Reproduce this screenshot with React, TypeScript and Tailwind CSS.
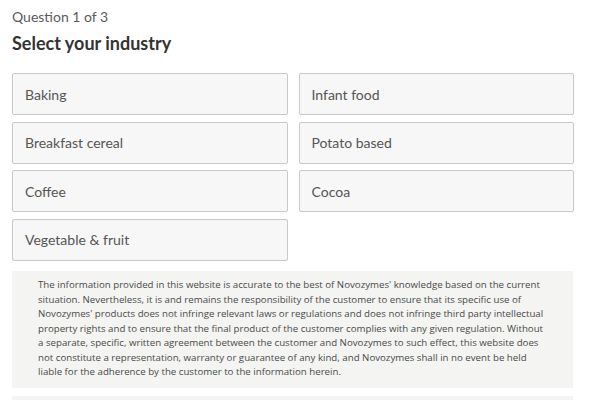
const industries = [
  'Baking',
  'Infant food',
  'Breakfast cereal',
  'Potato based',
  'Coffee',
  'Cocoa',
  'Vegetable & fruit',
]

export default function App() {
  return (
    <div className="w-[600px] h-[400px] overflow-hidden bg-white px-3 pt-[8px] font-['Lato',sans-serif]">
      <div className="text-[14px] leading-[18px] text-[#5a5a5a]">Question 1 of 3</div>
      <h1 className="mt-[6px] text-[18px] leading-[22px] font-bold text-[#333]">Select your industry</h1>

      <div className="mt-[19px] w-[562px] grid grid-cols-2 gap-x-[11px] gap-y-[6.5px]">
        {industries.map(name => (
          <button
            key={name}
            className="h-[42px] rounded-[2px] border-[1.5px] border-[#c9c9c9] bg-[#f7f7f7] pl-3 text-left text-[14px] text-[#555]"
          >
            {name}
          </button>
        ))}
      </div>

      {/* Disclaimer */}
      <div className="mt-[10px] w-[561px] h-[117px] bg-[#f4f4f2] pl-[26px] pr-[24px] pt-[7.5px] font-['Open_Sans',sans-serif] text-[9.7px] leading-[14.5px] text-[#4a4a4a]">
        The information provided in this website is accurate to the best of Novozymes' knowledge based on the current
        situation. Nevertheless, it is and remains the responsibility of the customer to ensure that its specific use of
        Novozymes' products does not infringe relevant laws or regulations and does not infringe third party intellectual
        property rights and to ensure that the final product of the customer complies with any given regulation. Without
        a separate, specific, written agreement between the customer and Novozymes to such effect, this website does
        not constitute a representation, warranty or guarantee of any kind, and Novozymes shall in no event be held
        liable for the adherence by the customer to the information herein.
      </div>
      <div className="mt-[8px] w-[561px] h-[10px] bg-[#f4f4f4]" />
    </div>
  )
}
